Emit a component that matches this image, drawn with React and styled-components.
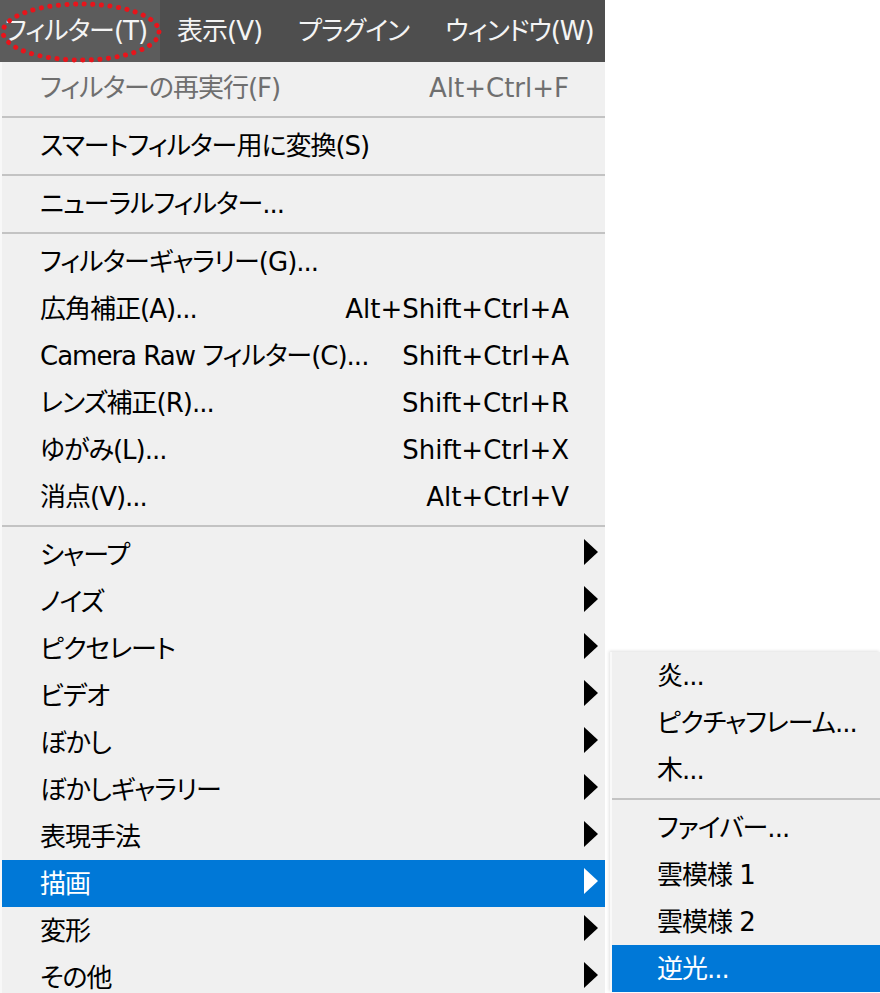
import React from 'react';
import styled, { createGlobalStyle } from 'styled-components';

const GlobalStyle = createGlobalStyle`
  html, body { margin: 0; padding: 0; background: #fff; }
  body {
    font-family: 'DejaVu Sans', 'Noto Sans CJK JP', sans-serif;
    font-feature-settings: 'palt';
  }
`;

const Page = styled.div`
  position: relative;
  width: 880px;
  height: 993px;
  overflow: hidden;
  background: #fff;
`;

const MenuBar = styled.div`
  display: flex;
  align-items: stretch;
  gap: 36px;
  width: 605px;
  height: 62px;
  background: #4e4e4e;
`;

const BarItem = styled.div`
  position: relative;
  display: flex;
  align-items: center;
  padding: ${p => (p.$active ? '0 13px 0 5px' : '0')};
  margin-right: ${p => (p.$active ? '-19px' : '0')};
  color: #f4f4f4;
  font-size: 26px;
  line-height: 1;
  letter-spacing: -1px;
  white-space: nowrap;
  background: ${p => (p.$active ? '#5c5c5c' : 'transparent')};
`;

const Circle = styled.svg`
  position: absolute;
  left: 0;
  top: 0;
  pointer-events: none;
`;

const Menu = styled.div`
  width: 603px;
  border-left: 2px solid #f8f8f8;
  padding-top: 2px;
  background: #f0f0f0;
`;

const Row = styled.div`
  display: flex;
  align-items: center;
  height: 47px;
  padding: 0 7px 0 38px;
  font-size: 26px;
  line-height: 1;
  white-space: nowrap;
  color: ${p => (p.$disabled ? '#6f6f6f' : p.$active ? '#fff' : '#000')};
  background: ${p => (p.$active ? '#0078d7' : 'transparent')};
`;

const Label = styled.span`
  flex: 1;
  letter-spacing: -1px;
`;

const Shortcut = styled.span``;

const ArrowSlot = styled.span`
  width: 29px;
  display: flex;
  justify-content: flex-end;
  transform: translateY(-3px);
`;

const Separator = styled.div`
  height: 11px;
  display: flex;
  align-items: center;
  &::before {
    content: '';
    flex: 1;
    height: 2px;
    background: #c3c3c3;
  }
`;

const SubMenu = styled.div`
  position: absolute;
  left: 610px;
  top: 652px;
  width: 268px;
  border-left: 2px solid #f9f9f9;
  background: #f0f0f0;
  box-shadow: -1px -1px 3px rgba(0, 0, 0, 0.12);
`;

const SubRow = styled(Row)`
  padding: 0 0 0 45px;
`;

const Arrow = ({ color }) => (
  <svg width="14" height="26" viewBox="0 0 14 26">
    <polygon points="0,0 14,13 0,26" fill={color} />
  </svg>
);

const mainGroups = [
  [{ label: 'フィルターの再実行(F)', key: 'Alt+Ctrl+F', disabled: true }],
  [{ label: 'スマートフィルター用に変換(S)' }],
  [{ label: 'ニューラルフィルター...' }],
  [
    { label: 'フィルターギャラリー(G)...' },
    { label: '広角補正(A)...', key: 'Alt+Shift+Ctrl+A' },
    { label: 'Camera Raw フィルター(C)...', key: 'Shift+Ctrl+A' },
    { label: 'レンズ補正(R)...', key: 'Shift+Ctrl+R' },
    { label: 'ゆがみ(L)...', key: 'Shift+Ctrl+X' },
    { label: '消点(V)...', key: 'Alt+Ctrl+V' },
  ],
  [
    { label: 'シャープ', sub: true },
    { label: 'ノイズ', sub: true },
    { label: 'ピクセレート', sub: true },
    { label: 'ビデオ', sub: true },
    { label: 'ぼかし', sub: true },
    { label: 'ぼかしギャラリー', sub: true },
    { label: '表現手法', sub: true },
    { label: '描画', sub: true, active: true },
    { label: '変形', sub: true },
    { label: 'その他', sub: true },
  ],
];

const subGroups = [
  [{ label: '炎...' }, { label: 'ピクチャフレーム...' }, { label: '木...' }],
  [
    { label: 'ファイバー...' },
    { label: '雲模様 1' },
    { label: '雲模様 2' },
    { label: '逆光...', active: true },
  ],
];

export default function App() {
  return (
    <Page>
      <GlobalStyle />
      <MenuBar>
        <BarItem $active>
          フィルター(T)
          <Circle width="164" height="64" viewBox="0 0 164 64">
            <ellipse
              cx="81"
              cy="32"
              rx="78"
              ry="28"
              fill="none"
              stroke="#e8141b"
              strokeWidth="5"
              strokeDasharray="0.1 8.5"
              strokeLinecap="round"
            />
          </Circle>
        </BarItem>
        <BarItem>表示(V)</BarItem>
        <BarItem>プラグイン</BarItem>
        <BarItem>ウィンドウ(W)</BarItem>
      </MenuBar>

      <Menu>
        {mainGroups.map((group, gi) => (
          <React.Fragment key={gi}>
            {gi > 0 && <Separator />}
            {group.map(item => (
              <Row key={item.label} $disabled={item.disabled} $active={item.active}>
                <Label>{item.label}</Label>
                {item.key && <Shortcut>{item.key}</Shortcut>}
                <ArrowSlot>
                  {item.sub && <Arrow color={item.active ? '#fff' : '#000'} />}
                </ArrowSlot>
              </Row>
            ))}
          </React.Fragment>
        ))}
      </Menu>

      <SubMenu>
        {subGroups.map((group, gi) => (
          <React.Fragment key={gi}>
            {gi > 0 && <Separator />}
            {group.map(item => (
              <SubRow key={item.label} $active={item.active}>
                <Label>{item.label}</Label>
              </SubRow>
            ))}
          </React.Fragment>
        ))}
      </SubMenu>
    </Page>
  );
}
